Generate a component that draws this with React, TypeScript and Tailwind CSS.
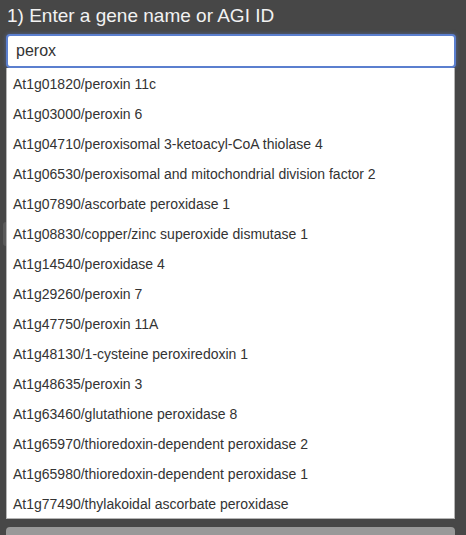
import React, { useState } from 'react';

const results = [
  'At1g01820/peroxin 11c',
  'At1g03000/peroxin 6',
  'At1g04710/peroxisomal 3-ketoacyl-CoA thiolase 4',
  'At1g06530/peroxisomal and mitochondrial division factor 2',
  'At1g07890/ascorbate peroxidase 1',
  'At1g08830/copper/zinc superoxide dismutase 1',
  'At1g14540/peroxidase 4',
  'At1g29260/peroxin 7',
  'At1g47750/peroxin 11A',
  'At1g48130/1-cysteine peroxiredoxin 1',
  'At1g48635/peroxin 3',
  'At1g63460/glutathione peroxidase 8',
  'At1g65970/thioredoxin-dependent peroxidase 2',
  'At1g65980/thioredoxin-dependent peroxidase 1',
  'At1g77490/thylakoidal ascorbate peroxidase',
];

const App: React.FC = () => {
  const [query, setQuery] = useState('perox');

  return (
    <div className="w-[466px] h-[535px] overflow-hidden bg-[#474747] font-['Liberation_Sans',Arial,sans-serif]">
      <div className="px-[6px] pt-[2px]">
        <h3 className="text-[19px] leading-[28px] text-[#f2f2f2] pl-[1px] mb-[4px]">1) Enter a gene name or AGI ID</h3>

        <div className="relative">
          <input
            value={query}
            onChange={(e) => setQuery(e.target.value)}
            autoFocus
            className="w-[450px] h-[34px] px-[8px] rounded-[4px] border-2 border-[#5b7fcf] bg-white text-[16px] text-[#333] outline-none shadow-[0_0_4px_rgba(91,127,207,0.5)]"
          />

          {/* content sitting under the suggestion list */}
          <div className="pt-[154px]">
            <div className="-ml-[3px] h-[24px] w-[452px] rounded-[3px] bg-[#5a5a5a]"></div>
          </div>
          <div className="mt-[281px] h-[10px] w-[449px] rounded-t-[4px] bg-[#999999]"></div>

          <ul className="absolute left-0 top-[34px] w-[449px] bg-white border border-[#b5b5b5] border-t-0">
            {results.map((r) => (
              <li key={r} className="h-[30px] flex items-center px-[6px] pt-[2px] text-[14px] text-[#333] whitespace-nowrap">
                {r}
              </li>
            ))}
          </ul>
        </div>
      </div>
    </div>
  );
};

export default App;
